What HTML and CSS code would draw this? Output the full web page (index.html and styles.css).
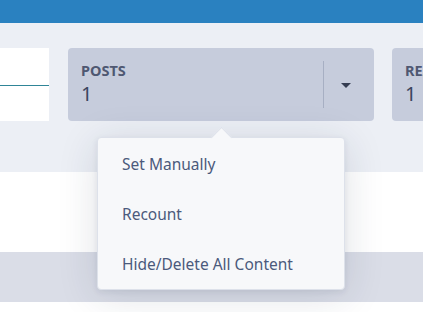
FILE: index.html
```html
<!DOCTYPE html>
<html>
<head>
<meta charset="utf-8">
<link rel="stylesheet" href="styles.css">
</head>
<body>
<div class="page">
  <div class="topbar"></div>
  <div class="stats">
    <div class="stat-row">
      <div class="stat-input"><div class="underline"></div></div>
      <div class="stat-card">
        <div class="stat-body">
          <div class="stat-label">POSTS</div>
          <div class="stat-value">1</div>
        </div>
        <div class="stat-toggle"><span class="caret"></span></div>
      </div>
      <div class="stat-card">
        <div class="stat-body">
          <div class="stat-label">REACTIONS</div>
          <div class="stat-value">1</div>
        </div>
      </div>
    </div>
  </div>
  <div class="section-white"></div>
  <div class="section-band"></div>
  <div class="menu">
    <div class="menu-item">Set Manually</div>
    <div class="menu-item">Recount</div>
    <div class="menu-item">Hide/Delete All Content</div>
  </div>
</div>
</body>
</html>
```
FILE: styles.css
```css
html, body {
  margin: 0;
  padding: 0;
}
body {
  font-family: "Noto Sans", "Open Sans", sans-serif;
  background: #ffffff;
}
.page {
  position: relative;
  width: 423px;
  height: 312px;
  overflow: hidden;
}
.topbar {
  height: 23px;
  background: #2a81c0;
}
.stats {
  background: #eceff5;
  padding: 25px 0 51px;
}
.stat-row {
  display: flex;
  gap: 18px;
  height: 73px;
}
.stat-input {
  flex: 0 0 49px;
  margin-right: 1px;
  background: #ffffff;
  display: flex;
  flex-direction: column;
  justify-content: center;
}
.underline {
  height: 1px;
  margin-top: 1px;
  background: #2f8597;
}
.stat-card {
  flex: 0 0 306px;
  display: flex;
  background: #c6ccdc;
  border-radius: 4px;
  overflow: hidden;
}
.stat-body {
  flex: 1;
  padding: 14px 0 0 13px;
  white-space: nowrap;
}
.stat-label {
  font-size: 14.5px;
  line-height: 17px;
  font-weight: 700;
  color: #4f5872;
}
.stat-value {
  margin-top: 4px;
  font-size: 20px;
  line-height: 22px;
  color: #3a445e;
}
.stat-toggle {
  flex: 0 0 51px;
  margin: 13px 0;
  border-left: 1px solid #a7afc3;
  display: flex;
  align-items: center;
  justify-content: center;
  padding-right: 7px;
  box-sizing: border-box;
}
.caret {
  width: 0;
  height: 0;
  border-left: 5px solid transparent;
  border-right: 5px solid transparent;
  border-top: 5px solid #353d52;
  margin-top: 2px;
}
.section-white {
  height: 80px;
  background: #ffffff;
}
.section-band {
  height: 50px;
  background: #dadde7;
}
.menu {
  position: absolute;
  left: 97px;
  top: 137px;
  width: 246px;
  padding: 1px 0 0;
  background: #f7f8fa;
  border: 1px solid #dde1ea;
  border-radius: 4px;
  box-shadow: 0 6px 40px rgba(30, 40, 70, 0.14), 0 2px 6px rgba(30, 40, 70, 0.08);
}
.menu::before {
  content: "";
  position: absolute;
  left: 116px;
  top: -8px;
  width: 14px;
  height: 14px;
  background: #f7f8fa;
  border-top: 1px solid #dde1ea;
  border-left: 1px solid #dde1ea;
  transform: rotate(45deg);
}
.menu-item {
  position: relative;
  height: 50px;
  line-height: 50px;
  padding-left: 24px;
  font-size: 15.5px;
  color: #4b5a7c;
}
```
